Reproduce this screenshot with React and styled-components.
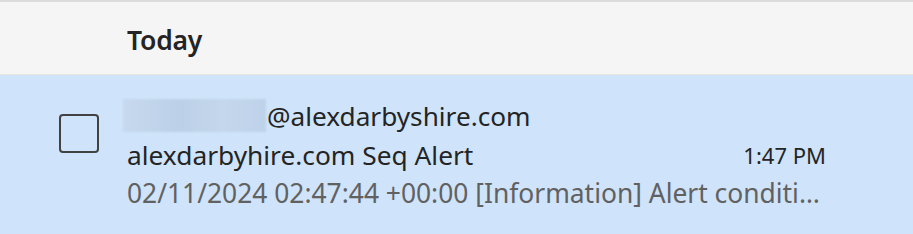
import React from 'react';
import styled, { createGlobalStyle } from 'styled-components';

const GlobalStyle = createGlobalStyle`
  html, body {
    margin: 0;
    padding: 0;
    background: #cfe4fa;
  }
  body {
    font-family: "Noto Sans", "Open Sans", sans-serif;
  }
`;

const ListStyles = styled.div`
  width: 913px;
  height: 234px;
  overflow: hidden;
  background: #cfe4fa;
`;

const GroupHeader = styled.div`
  height: 68px;
  border-top: 2px solid #dcdcdc;
  border-bottom: 1px solid #e8e4e0;
  background: #f5f5f5;
  display: flex;
  align-items: center;
  padding: 4px 0 0 127px;
  box-sizing: content-box;
`;

const HeaderTitle = styled.span`
  font-size: 26.5px;
  font-weight: 600;
  color: #242424;
  letter-spacing: -0.2px;
`;

const MessageRow = styled.div`
  display: flex;
  align-items: flex-start;
  padding: 20px 87px 0 59px;
  gap: 28px;
`;

const CheckBox = styled.div`
  width: 36px;
  height: 35px;
  margin-top: 19px;
  border: 2px solid #424242;
  border-radius: 4px;
  flex-shrink: 0;
`;

const Body = styled.div`
  flex: 1;
  min-width: 0;
  display: flex;
  flex-direction: column;
`;

const Line = styled.div`
  display: flex;
  align-items: center;
  height: ${(p) => p.$h || 38}px;
  white-space: nowrap;
`;

const Redacted = styled.span`
  display: inline-block;
  width: 143px;
  height: 33px;
  margin-left: -4px;
  margin-right: 1px;
  background: linear-gradient(90deg, #c6d9ee 0%, #bcd0e8 40%, #c4d7ec 70%, #bed2ea 100%);
  filter: blur(1px);
`;

const Sender = styled.span`
  font-size: 26.2px;
  color: #242424;
`;

const Subject = styled.span`
  flex: 1;
  font-size: 26.3px;
  color: #242424;
`;

const Time = styled.span`
  font-size: 22px;
  color: #242424;
`;

const Preview = styled.span`
  font-size: 26.4px;
  color: #616161;
  overflow: hidden;
  text-overflow: ellipsis;
`;

export default function App() {
  return (
    <ListStyles>
      <GlobalStyle />
      <GroupHeader>
        <HeaderTitle>Today</HeaderTitle>
      </GroupHeader>
      <MessageRow>
        <CheckBox />
        <Body>
          <Line $h={41}>
            <Redacted />
            <Sender>@alexdarbyshire.com</Sender>
          </Line>
          <Line>
            <Subject>alexdarbyhire.com Seq Alert</Subject>
            <Time>1:47 PM</Time>
          </Line>
          <Line>
            <Preview>02/11/2024 02:47:44 +00:00 [Information] Alert conditi…</Preview>
          </Line>
        </Body>
      </MessageRow>
    </ListStyles>
  );
}
